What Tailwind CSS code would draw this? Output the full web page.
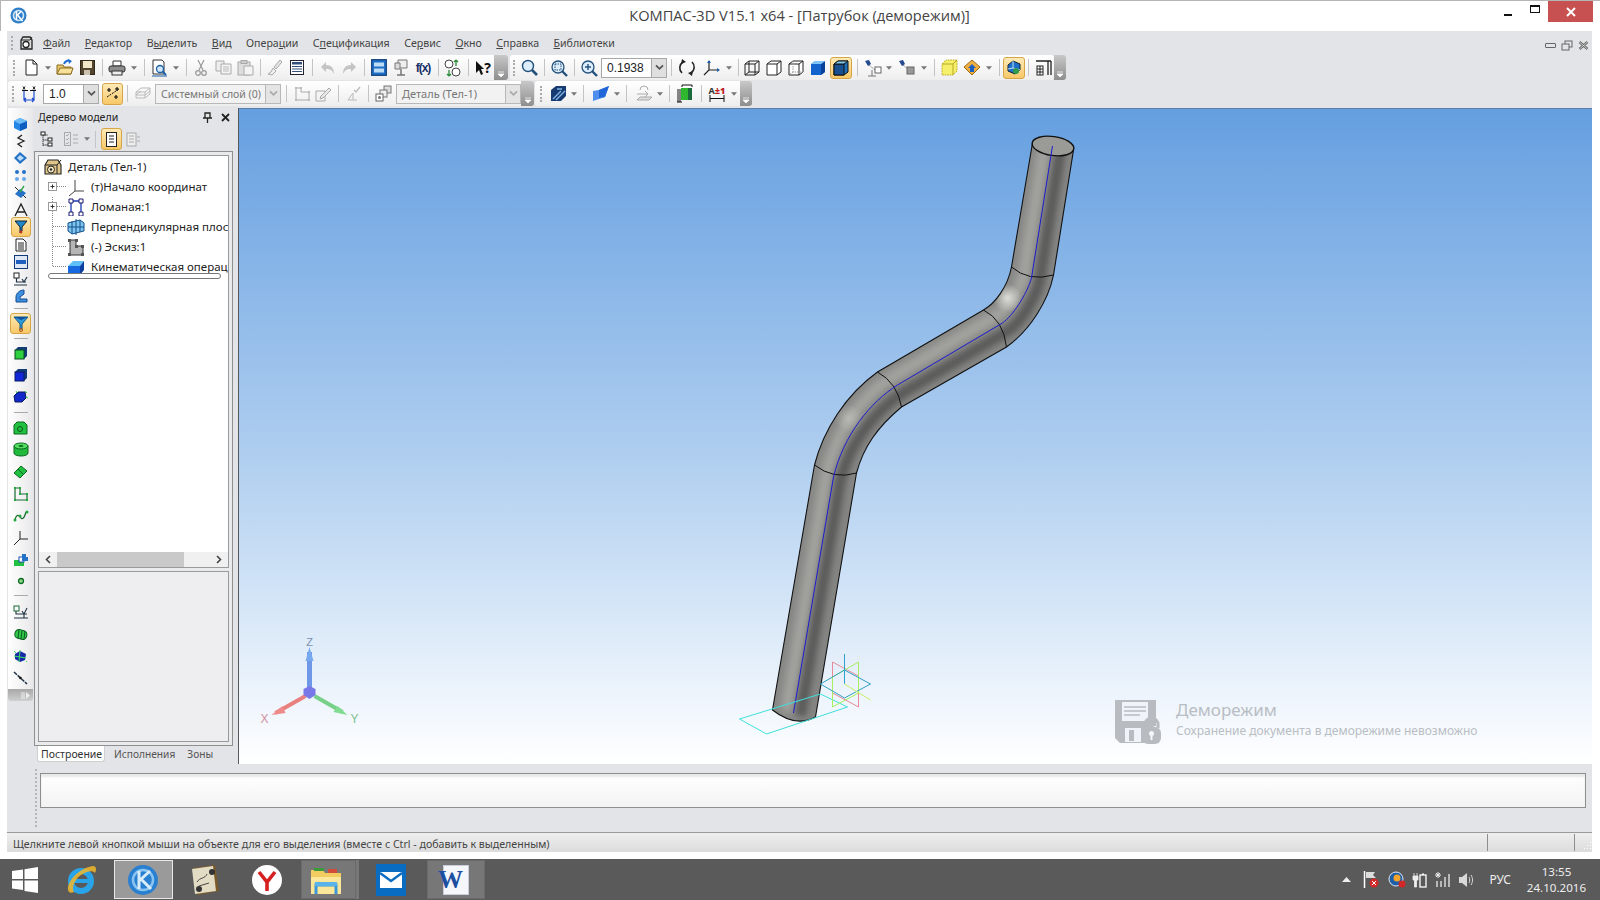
<!DOCTYPE html>
<html lang="ru">
<head>
<meta charset="UTF-8"/>
<title>КОМПАС-3D V15.1 x64</title>
<script src="https://cdn.jsdelivr.net/npm/@tailwindcss/browser@4"></script>
</head>
<body class="w-[1600px] h-[900px] overflow-hidden flex flex-col bg-white font-['Noto_Sans',sans-serif] text-[10.6px] text-[#333]">

<svg class="hidden" width="0" height="0">
  <defs>
    <symbol id="dd" viewBox="0 0 7 4"><path d="M0 0h7L3.5 4z" fill="#777"/></symbol>
    <symbol id="chev" viewBox="0 0 10 8"><path d="M1 1.5l4 4 4-4" fill="none" stroke="currentColor" stroke-width="2"/></symbol>
  </defs>
</svg>

<!-- title bar -->
<header class="h-[31px] shrink-0 relative flex items-center justify-center border-t border-l border-[#b5b5b5] bg-white">
  <svg class="absolute left-[9px] top-[6px]" width="17" height="17" viewBox="0 0 17 17"><circle cx="8.5" cy="8.5" r="8" fill="#2e7fc8"/><circle cx="8.5" cy="8.5" r="5" fill="none" stroke="#cfe6f8" stroke-width="1.6"/><path d="M6.5 4v9M6.5 9l5-5M7.5 8l5 6" stroke="#fff" stroke-width="1.6" fill="none"/></svg>
  <span class="text-[14.6px] text-[#444] font-['Open_Sans',sans-serif] pb-[1px] -ml-[2px]">КОМПАС-3D V15.1 x64 - [Патрубок (деморежим)]</span>
  <div class="absolute right-[7px] top-0 h-[21px] flex items-center">
    <i class="block w-[8px] h-[2px] bg-[#111] mt-[7px] mr-[18px]"></i>
    <i class="block w-[10px] h-[8px] border border-[#111] border-t-2 mb-[5px] mr-[8px]"></i>
    <div class="w-[45px] h-[21px] bg-[#c75050] flex items-center justify-center"><svg width="10" height="10" viewBox="0 0 10 10"><path d="M1 1l8 8M9 1l-8 8" stroke="#fff" stroke-width="2"/></svg></div>
  </div>
</header>

<!-- window -->
<div class="flex-1 min-h-0 ml-[7px] mr-[8px] flex flex-col bg-[#e3e4e7]">

  <!-- menu -->
  <nav class="h-[24px] shrink-0 relative flex items-center pl-[4px] text-[#444]">
    <i class="w-[2px] h-[14px] border-l-2 border-dotted border-[#aaa] mr-[5px]"></i>
    <svg width="16" height="16" viewBox="0 0 16 16" class="mr-[9px]"><path d="M3 5l2-3h7l2 3v9H3z" fill="#ddd" stroke="#222" stroke-width="1.3"/><circle cx="8" cy="9.5" r="3" fill="#fff" stroke="#222" stroke-width="1.3"/><path d="M3 5h9l2-3" fill="none" stroke="#222"/></svg>
    <div class="flex gap-[14.4px] pt-[1px]">
      <span><u>Ф</u>айл</span><span><u>Р</u>едактор</span><span>В<u>ы</u>делить</span><span><u>В</u>ид</span><span>Опера<u>ц</u>ии</span><span>С<u>п</u>ецификация</span><span>Се<u>р</u>вис</span><span><u>О</u>кно</span><span><u>С</u>правка</span><span><u>Б</u>иблиотеки</span>
    </div>
    <div class="absolute right-[3px] top-[9px] flex items-center gap-[5px]">
      <i class="block w-[11px] h-[5px] border border-[#666] rounded-[1px]"></i>
      <svg width="12" height="11" viewBox="0 0 12 11"><rect x="4" y="1" width="7" height="6" fill="none" stroke="#666"/><rect x="1" y="4" width="7" height="6" fill="#e3e4e7" stroke="#666"/></svg>
      <svg width="11" height="9" viewBox="0 0 11 9"><path d="M1.5 1l8 7M9.5 1l-8 7" stroke="#666" stroke-width="2.4"/><path d="M1.5 1l8 7M9.5 1l-8 7" stroke="#e3e4e7" stroke-width=".8"/></svg>
    </div>
  </nav>

  <!-- toolbar row 1 -->
  <div class="h-[26px] shrink-0 flex items-start">
    <div class="ml-[1px] h-[25px] flex items-center bg-gradient-to-b from-white to-[#eeeeee] rounded-l-[3px]">
      <div class="w-[12px] flex justify-center"><i class="h-[16px] border-l-2 border-dotted border-[#aaa]"></i></div>
      <div class="w-[22px] flex justify-center"><svg width="15" height="17" viewBox="0 0 15 17"><path d="M2 1h7l4 4v11H2z" fill="#fff" stroke="#222"/><path d="M9 1v4h4" fill="none" stroke="#222"/></svg></div>
      <div class="w-[12px] flex justify-center"><svg width="6" height="4"><use href="#dd"/></svg></div>
      <div class="w-[22px] flex justify-center"><svg width="18" height="17" viewBox="0 0 18 17"><path d="M1 15V6h6l1 2h7v7z" fill="#e8c86a" stroke="#8a6a20"/><path d="M1 15l3-6h13l-2 6z" fill="#f6e09a" stroke="#8a6a20"/><path d="M8 5c1-3 4-4 6-3" fill="none" stroke="#1d6fd0" stroke-width="2"/><path d="M12 0l4 2-3 3z" fill="#1d6fd0"/></svg></div>
      <div class="w-[22px] flex justify-center"><svg width="15" height="15" viewBox="0 0 15 15"><rect x=".5" y=".5" width="14" height="14" fill="#54452f" stroke="#33291a"/><rect x="3" y="1" width="9" height="7" fill="#f1e6c8"/><rect x="4" y="10" width="6" height="5" fill="#c9c2ae"/></svg></div>
      <div class="w-[8px] flex justify-center"><i class="w-px h-[17px] bg-[#c4c4c4]"></i></div>
      <div class="w-[22px] flex justify-center"><svg width="18" height="16" viewBox="0 0 18 16"><path d="M5 1h8v5H5z" fill="#fff" stroke="#333"/><rect x="1" y="6" width="16" height="6" rx="2" fill="#8e8e8e" stroke="#333"/><rect x="4" y="11" width="10" height="4" fill="#eee" stroke="#333"/></svg></div>
      <div class="w-[12px] flex justify-center"><svg width="6" height="4"><use href="#dd"/></svg></div>
      <div class="w-[8px] flex justify-center"><i class="w-px h-[17px] bg-[#c4c4c4]"></i></div>
      <div class="w-[22px] flex justify-center"><svg width="17" height="18" viewBox="0 0 17 18"><path d="M2 1h9l2 2v12H2z" fill="#fff" stroke="#333"/><circle cx="9" cy="10" r="3.5" fill="#cfe6f8" stroke="#1d5fa8" stroke-width="1.3"/><path d="M11.5 12.5l3.5 3.5" stroke="#1d5fa8" stroke-width="2"/><path d="M1 17h15" stroke="#1d5fa8"/></svg></div>
      <div class="w-[12px] flex justify-center"><svg width="6" height="4"><use href="#dd"/></svg></div>
      <div class="w-[8px] flex justify-center"><i class="w-px h-[17px] bg-[#c4c4c4]"></i></div>
      <div class="w-[22px] flex justify-center"><svg width="12" height="17" viewBox="0 0 12 17"><path d="M3 1l5 10M9 1L4 11" stroke="#999" stroke-width="1.2"/><circle cx="3" cy="14" r="2.3" fill="none" stroke="#999" stroke-width="1.2"/><circle cx="9" cy="14" r="2.3" fill="none" stroke="#999" stroke-width="1.2"/></svg></div>
      <div class="w-[22px] flex justify-center"><svg width="17" height="15" viewBox="0 0 17 15"><path d="M1 1h8v10H1z" fill="#eee" stroke="#aaa"/><path d="M6 4h10v10H6z" fill="#f4f4f4" stroke="#aaa"/><path d="M8 7h6M8 9h6M8 11h6" stroke="#bbb"/></svg></div>
      <div class="w-[22px] flex justify-center"><svg width="17" height="16" viewBox="0 0 17 16"><rect x="1" y="2" width="12" height="13" fill="#ddd" stroke="#aaa"/><rect x="4" y="0.5" width="6" height="3" fill="#ccc" stroke="#aaa"/><path d="M7 6h9v9H7z" fill="#f4f4f4" stroke="#aaa"/></svg></div>
      <div class="w-[8px] flex justify-center"><i class="w-px h-[17px] bg-[#c4c4c4]"></i></div>
      <div class="w-[22px] flex justify-center"><svg width="16" height="17" viewBox="0 0 16 17"><path d="M13 1L7 8l2 2 6-7z" fill="#e3e3e3" stroke="#aaa"/><path d="M6 9l3 3-4 4-4-1 3-2z" fill="#eee" stroke="#aaa"/></svg></div>
      <div class="w-[22px] flex justify-center"><svg width="14" height="15" viewBox="0 0 14 15"><rect x=".5" y=".5" width="13" height="14" fill="#fff" stroke="#223"/><rect x="2" y="2" width="10" height="2.5" fill="#34507c"/><path d="M2 6.5h10M2 9h10M2 11.5h10" stroke="#34507c" stroke-width="1.2"/></svg></div>
      <div class="w-[8px] flex justify-center"><i class="w-px h-[17px] bg-[#c4c4c4]"></i></div>
      <div class="w-[22px] flex justify-center"><svg width="15" height="14" viewBox="0 0 15 14"><path d="M1 6l5-5v3c5 0 8 3 8 9-2-4-4-5-8-5v3z" fill="#c4c4c4"/></svg></div>
      <div class="w-[22px] flex justify-center"><svg width="15" height="14" viewBox="0 0 15 14"><path d="M14 6L9 1v3C4 4 1 7 1 13c2-4 4-5 8-5v3z" fill="#c4c4c4"/></svg></div>
      <div class="w-[8px] flex justify-center"><i class="w-px h-[17px] bg-[#c4c4c4]"></i></div>
      <div class="w-[22px] flex justify-center"><svg width="16" height="17" viewBox="0 0 16 17"><rect x=".7" y=".7" width="14.6" height="15.6" fill="#1f6fc8" stroke="#16447e" stroke-width="1.3"/><rect x="3" y="3.5" width="10" height="4" fill="#bcdcf6"/><rect x="3" y="9.5" width="10" height="4" fill="#bcdcf6"/></svg></div>
      <div class="w-[22px] flex justify-center"><svg width="17" height="17" viewBox="0 0 17 17"><path d="M5 1h9v8H5z" fill="#eee" stroke="#777"/><path d="M2 4h5v6H2z" fill="#ddd" stroke="#777"/><path d="M8 10v6M4 16h8" stroke="#777" stroke-width="1.5"/></svg></div>
      <div class="w-[22px] flex justify-center font-['Liberation_Sans',sans-serif] text-[#16306a] text-[12px] font-bold tracking-[-1px]">f(x)</div>
      <div class="w-[8px] flex justify-center"><i class="w-px h-[17px] bg-[#c4c4c4]"></i></div>
      <div class="w-[22px] flex justify-center"><svg width="18" height="18" viewBox="0 0 18 18"><circle cx="5" cy="5" r="4" fill="#fff" stroke="#444"/><circle cx="12" cy="13" r="4" fill="#fff" stroke="#444"/><path d="M12 1v6M12 1l-2 2M12 1l2 2M5 11v6M5 17l-2-2M5 17l2-2" stroke="#2a8a3a" stroke-width="1.3" fill="none"/></svg></div>
      <div class="w-[8px] flex justify-center"><i class="w-px h-[17px] bg-[#c4c4c4]"></i></div>
      <div class="w-[22px] flex items-center justify-center"><svg width="10" height="15" viewBox="0 0 10 15"><path d="M1 1l8 8H6l2 5-2 1-2-5-3 3z" fill="#111"/></svg><span class="text-[14px] leading-none font-bold text-[#111] -ml-[1px]">?</span></div>
    </div>
    <div class="h-[25px] w-[14px] bg-gradient-to-b from-[#c8c8c8] to-[#8e8e8e] rounded-r-[3px] flex items-end justify-center pb-[3px]"><svg width="6" height="6" viewBox="0 0 6 6"><path d="M0 1h6M0 3h6L3 6z" stroke="#fff" fill="#fff" stroke-width=".7"/></svg></div>
    <div class="ml-[2px] h-[25px] flex items-center bg-gradient-to-b from-white to-[#eeeeee] rounded-[3px]">
      <div class="w-[8px] flex justify-center"><i class="h-[16px] border-l-2 border-dotted border-[#aaa]"></i></div>
      <div class="w-[22px] flex justify-center"><svg width="17" height="18" viewBox="0 0 17 18"><circle cx="7" cy="7" r="5.5" fill="#dceefb" stroke="#24507c" stroke-width="1.4"/><path d="M11 11l5 5" stroke="#24507c" stroke-width="2.6"/></svg></div>
      <div class="w-[8px] flex justify-center"><i class="w-px h-[17px] bg-[#c4c4c4]"></i></div>
      <div class="w-[22px] flex justify-center"><svg width="18" height="18" viewBox="0 0 18 18"><circle cx="8" cy="8" r="6" fill="#dceefb" stroke="#24507c" stroke-width="1.3"/><rect x="5" y="5" width="6" height="6" fill="none" stroke="#24507c" stroke-dasharray="1.5 1"/><path d="M12 12l5 5" stroke="#24507c" stroke-width="2.4"/></svg></div>
      <div class="w-[8px] flex justify-center"><i class="w-px h-[17px] bg-[#c4c4c4]"></i></div>
      <div class="w-[22px] flex justify-center"><svg width="18" height="18" viewBox="0 0 18 18"><circle cx="8" cy="8" r="6" fill="#dceefb" stroke="#24507c" stroke-width="1.3"/><path d="M5 8h6M8 5v6" stroke="#24507c" stroke-width="1.4"/><path d="M12 12l5 5" stroke="#24507c" stroke-width="2.4"/></svg></div>
      <div class="w-[66px] h-[20px] ml-[1px] flex bg-white border border-[#a8a8a8] text-[#222] font-['Liberation_Sans',sans-serif] text-[12px]">
        <span class="flex-1 pl-[5px] leading-[18px]">0.1938</span>
        <div class="w-[15px] bg-[#dfdfdf] border-l border-[#a8a8a8] text-[#555] flex items-center justify-center"><svg width="9" height="7"><use href="#chev"/></svg></div>
      </div>
      <div class="w-[8px] flex justify-center"><i class="w-px h-[17px] bg-[#c4c4c4]"></i></div>
      <div class="w-[22px] ml-[1px] flex justify-center"><svg width="18" height="17" viewBox="0 0 18 17"><path d="M5 3A7 7 0 0 0 4 14M13 14A7 7 0 0 0 14 3" fill="none" stroke="#222" stroke-width="1.6"/><path d="M4 0l4 3-5 2zM14 17l-4-3 5-2z" fill="#222"/></svg></div>
      <div class="w-[22px] ml-[3px] flex justify-center"><svg width="18" height="17" viewBox="0 0 18 17"><path d="M6 2v9L1 16M6 11h10" fill="none" stroke="#222" stroke-width="1.2"/><path d="M6 1l-2 3h4zM17 11l-3-2v4z" fill="#1d5fa8"/></svg></div>
      <div class="w-[12px] flex justify-center"><svg width="6" height="4"><use href="#dd"/></svg></div>
      <div class="w-[6px] flex justify-center"><i class="w-px h-[17px] bg-[#c4c4c4]"></i></div>
      <div class="w-[22px] flex justify-center"><svg width="16" height="16" viewBox="0 0 16 16"><path d="M1 4l4-3h10v11l-4 3H1zM1 4h10v11M11 4l4-3M5 1v11h10M5 12l-4 3" fill="none" stroke="#222"/></svg></div>
      <div class="w-[22px] flex justify-center"><svg width="16" height="16" viewBox="0 0 16 16"><path d="M1 4l4-3h10v11l-4 3H1zM1 4h10v11M11 4l4-3" fill="#fff" stroke="#222"/></svg></div>
      <div class="w-[22px] flex justify-center"><svg width="16" height="16" viewBox="0 0 16 16"><path d="M1 4l4-3h10v11l-4 3H1zM1 4h10v11M11 4l4-3" fill="#fff" stroke="#222"/><path d="M5 1v11h10M5 12l-4 3" fill="none" stroke="#999" stroke-dasharray="1.5 1"/></svg></div>
      <div class="w-[22px] flex justify-center"><svg width="16" height="16" viewBox="0 0 16 16"><path d="M1 4l4-3h10v11l-4 3H1z" fill="#2c8fee"/><path d="M1 4h10v11H1z" fill="#1264cc"/><path d="M11 4l4-3v11l-4 3z" fill="#0a3f9a"/><path d="M1 4l4-3h10l-4 3z" fill="#7ec4f8"/></svg></div>
      <div class="w-[22px] h-[22px] ml-[1px] flex items-center justify-center rounded-[3px] border border-[#d6a548] bg-gradient-to-b from-[#fdeab5] to-[#f8c866]"><svg width="16" height="16" viewBox="0 0 16 16"><path d="M1 4l4-3h10v11l-4 3H1z" fill="#1f6fb8" stroke="#111"/><path d="M1 4h10v11H1z" fill="#174f90" stroke="#111"/><path d="M1 4l4-3h10l-4 3z" fill="#80c8ee" stroke="#111"/></svg></div>
      <div class="w-[10px] flex justify-center"><i class="w-px h-[17px] bg-[#c4c4c4]"></i></div>
      <div class="w-[22px] flex justify-center"><svg width="20" height="18" viewBox="0 0 20 18"><path d="M2 2l4-1 2 4-3 2z" fill="#234a90"/><path d="M6 6l6 5" stroke="#888" stroke-dasharray="2 1"/><rect x="12" y="8" width="6" height="6" fill="#fff" stroke="#666"/><path d="M9 11v6M5 17h8" stroke="#777"/></svg></div>
      <div class="w-[10px] flex justify-center"><svg width="6" height="4"><use href="#dd"/></svg></div>
      <div class="w-[22px] ml-[2px] flex justify-center"><svg width="20" height="18" viewBox="0 0 20 18"><path d="M2 2l4-1 2 4-3 2z" fill="#234a90"/><path d="M6 6l5 4" stroke="#888" stroke-dasharray="2 1"/><rect x="10" y="8" width="7" height="7" fill="#999" stroke="#666"/></svg></div>
      <div class="w-[12px] flex justify-center"><svg width="6" height="4"><use href="#dd"/></svg></div>
      <div class="w-[8px] flex justify-center"><i class="w-px h-[17px] bg-[#c4c4c4]"></i></div>
      <div class="w-[22px] flex justify-center"><svg width="17" height="17" viewBox="0 0 17 17"><path d="M1 5l4-4h11v11l-4 4H1z" fill="#f6ef6a" stroke="#b8a820" stroke-dasharray="1.5 1"/><path d="M1 5h11v11M12 5l4-4" fill="none" stroke="#b8a820"/></svg></div>
      <div class="w-[22px] ml-[1px] flex justify-center"><svg width="18" height="17" viewBox="0 0 18 17"><path d="M1 8l8-7 8 7-8 8z" fill="#f0b040" stroke="#a06a10"/><path d="M5 9l4-4 4 4-2 0v4H7V9z" fill="#1d5fc0"/></svg></div>
      <div class="w-[12px] flex justify-center"><svg width="6" height="4"><use href="#dd"/></svg></div>
      <div class="w-[8px] flex justify-center"><i class="w-px h-[17px] bg-[#c4c4c4]"></i></div>
      <div class="w-[22px] h-[22px] flex items-center justify-center rounded-[3px] border border-[#d6a548] bg-gradient-to-b from-[#fdeab5] to-[#f8c866]"><svg width="16" height="16" viewBox="0 0 16 16"><path d="M2 5l5-4 7 3v6l-5 4-7-3z" fill="#1f6fc8" stroke="#123"/><path d="M7 1v7l7 2M7 8l-5 1" stroke="#bfe0f8" fill="none"/><circle cx="10" cy="11" r="3" fill="#2f9a4a"/></svg></div>
      <div class="w-[7px] flex justify-center"><i class="w-px h-[17px] bg-[#c4c4c4]"></i></div>
      <div class="w-[22px] flex justify-center"><svg width="17" height="17" viewBox="0 0 17 17"><path d="M1 2h15M13 2v14M16 2v14" stroke="#222" stroke-width="1.3" fill="none"/><rect x="2" y="7" width="6" height="9" fill="#fff" stroke="#222"/><path d="M2 10h6M2 13h6M5 7v9" stroke="#222"/></svg></div>
    </div>
    <div class="h-[25px] w-[12px] bg-gradient-to-b from-[#c8c8c8] to-[#8e8e8e] rounded-r-[3px] flex items-end justify-center pb-[3px]"><svg width="6" height="6" viewBox="0 0 6 6"><path d="M0 1h6M0 3h6L3 6z" stroke="#fff" fill="#fff" stroke-width=".7"/></svg></div>
  </div>

  <!-- toolbar row 2 -->
  <div class="h-[27px] shrink-0 flex items-start">
    <div class="ml-[1px] h-[25px] flex items-center bg-gradient-to-b from-white to-[#eeeeee] rounded-l-[3px]">
      <div class="w-[10px] flex justify-center"><i class="h-[16px] border-l-2 border-dotted border-[#aaa]"></i></div>
      <div class="w-[22px] flex justify-center"><svg width="16" height="18" viewBox="0 0 16 18"><path d="M2 1l2 3M4 1L2 4M12 1l2 3M14 1l-2 3M1 5h6M9 5h6" stroke="#111" fill="none" transform="translate(0 .5)"/><path d="M3 6v9M13 6v9M3 15h10M5 13l-2 2 2 2M11 13l2 2-2 2" stroke="#1f4fd0" stroke-width="1.2" fill="none"/></svg></div>
      <div class="w-[56px] h-[20px] ml-[3px] flex bg-white border border-[#a8a8a8] text-[#222] font-['Liberation_Sans',sans-serif] text-[12px]">
        <span class="flex-1 pl-[5px] leading-[18px]">1.0</span>
        <div class="w-[15px] bg-[#dfdfdf] border-l border-[#a8a8a8] text-[#555] flex items-center justify-center"><svg width="9" height="7"><use href="#chev"/></svg></div>
      </div>
      <div class="w-[21px] h-[22px] ml-[3px] flex items-center justify-center rounded-[3px] border border-[#d6a548] bg-gradient-to-b from-[#fdeab5] to-[#f8c866]"><svg width="16" height="17" viewBox="0 0 16 17"><path d="M2 12L14 4" stroke="#111" stroke-dasharray="2 1"/><path d="M4 3v4M2 5h4M12 2v4M10 4h4M11 10v4M9 12h4" stroke="#111" stroke-width="1.2"/></svg></div>
      <div class="w-[9px] flex justify-center"><i class="w-px h-[17px] bg-[#c4c4c4]"></i></div>
      <div class="w-[22px] flex justify-center"><svg width="16" height="14" viewBox="0 0 16 14"><path d="M1 5l5-4h9l-5 4zM1 8l5-4M1 8h9l5-4M1 11h9l5-4M1 5v6M10 5v6M15 1v6" fill="none" stroke="#bbb"/></svg></div>
      <div class="w-[126px] h-[20px] ml-[1px] flex bg-[#f2f2f2] border border-[#b8b8b8] text-[#777] text-[10.5px]">
        <span class="flex-1 pl-[5px] leading-[18px] whitespace-nowrap">Системный слой (0)</span>
        <div class="w-[15px] bg-[#e4e4e4] border-l border-[#b8b8b8] text-[#aaa] flex items-center justify-center"><svg width="9" height="7"><use href="#chev"/></svg></div>
      </div>
      <div class="w-[10px] flex justify-center"><i class="w-px h-[17px] bg-[#c4c4c4]"></i></div>
      <div class="w-[22px] flex justify-center"><svg width="17" height="16" viewBox="0 0 17 16"><path d="M2 2h5v4h8v8H2z" fill="none" stroke="#aaa"/><path d="M1 1h2v2H1zM6 1h2v2H6zM1 13h2v2H1zM14 13h2v2h-2zM14 5h2v2h-2z" fill="#bbb"/></svg></div>
      <div class="w-[20px] flex justify-center"><svg width="17" height="16" viewBox="0 0 17 16"><path d="M1 5h9v10H1z" fill="#f4f4f4" stroke="#aaa"/><path d="M6 10l8-8 2 2-8 8-3 1z" fill="#e8e8e8" stroke="#aaa"/></svg></div>
      <div class="w-[10px] flex justify-center"><i class="w-px h-[17px] bg-[#c4c4c4]"></i></div>
      <div class="w-[21px] flex justify-center"><svg width="16" height="15" viewBox="0 0 16 15"><path d="M2 14h9M2 14l5-7M7 7v7" fill="none" stroke="#bbb"/><path d="M8 4l2 2 4-5" fill="none" stroke="#bbb" stroke-width="1.3"/></svg></div>
      <div class="w-[8px] flex justify-center"><i class="w-px h-[17px] bg-[#c4c4c4]"></i></div>
      <div class="w-[22px] flex justify-center"><svg width="17" height="17" viewBox="0 0 17 17"><rect x="9" y="1" width="7" height="7" fill="#ddd" stroke="#777"/><rect x="5" y="5" width="7" height="7" fill="#eee" stroke="#777"/><rect x="1" y="9" width="7" height="7" fill="#fff" stroke="#666"/><circle cx="4.5" cy="12.5" r="1.5" fill="#777"/></svg></div>
      <div class="w-[125px] h-[20px] ml-[2px] flex bg-[#f2f2f2] border border-[#b8b8b8] text-[#777] text-[11px]">
        <span class="flex-1 pl-[5px] leading-[18px] whitespace-nowrap">Деталь (Тел-1)</span>
        <div class="w-[15px] bg-[#e4e4e4] border-l border-[#b8b8b8] text-[#aaa] flex items-center justify-center"><svg width="9" height="7"><use href="#chev"/></svg></div>
      </div>
    </div>
    <div class="h-[25px] w-[13px] bg-gradient-to-b from-[#c8c8c8] to-[#8e8e8e] rounded-r-[3px] flex items-end justify-center pb-[3px]"><svg width="6" height="6" viewBox="0 0 6 6"><path d="M0 1h6M0 3h6L3 6z" stroke="#fff" fill="#fff" stroke-width=".7"/></svg></div>
    <div class="ml-[1px] h-[25px] flex items-center bg-gradient-to-b from-white to-[#eeeeee] rounded-l-[3px]">
      <div class="w-[12px] flex justify-center"><i class="h-[16px] border-l-2 border-dotted border-[#aaa]"></i></div>
      <div class="w-[22px] flex justify-center"><svg width="17" height="17" viewBox="0 0 17 17"><path d="M1 5l5-4h10v10l-5 5H1z" fill="#173a70"/><path d="M3 14l8-8M6 15l9-9M7 4l5 0" stroke="#7fb4e4" stroke-width="1.4"/></svg></div>
      <div class="w-[10px] flex justify-center"><svg width="6" height="4"><use href="#dd"/></svg></div>
      <div class="w-[8px] flex justify-center"><i class="w-px h-[17px] bg-[#c4c4c4]"></i></div>
      <div class="w-[22px] ml-[3px] flex justify-center"><svg width="18" height="17" viewBox="0 0 18 17"><path d="M1 6l6-1 10-4-4 11-12 4z" fill="#4f90ee"/><path d="M7 5l10-4-4 11-6 1z" fill="#2166d8"/></svg></div>
      <div class="w-[10px] flex justify-center"><svg width="6" height="4"><use href="#dd"/></svg></div>
      <div class="w-[8px] flex justify-center"><i class="w-px h-[17px] bg-[#c4c4c4]"></i></div>
      <div class="w-[22px] ml-[4px] flex justify-center"><svg width="18" height="17" viewBox="0 0 18 17"><path d="M4 1a4 4 0 0 1 8 0" fill="none" transform="translate(0 4)" stroke="#aaa"/><path d="M1 9h11M9 6l3 3-3 3" fill="none" stroke="#aaa"/><path d="M1 15l3-3h12l-3 3z" fill="#ddd" stroke="#aaa"/></svg></div>
      <div class="w-[8px] flex justify-center"><svg width="6" height="4"><use href="#dd"/></svg></div>
      <div class="w-[10px] flex justify-center"><i class="w-px h-[17px] bg-[#c4c4c4]"></i></div>
      <div class="w-[22px] flex justify-center"><svg width="16" height="19" viewBox="0 0 16 19"><rect x="4" y="4" width="11" height="12" fill="#2fb82f"/><rect x="11" y="4" width="4" height="12" fill="#1a6a3a"/><path d="M1 5v13M3 5v13M5 1h10M0 18h5M5 3V1M15 3V1" stroke="#111" fill="none"/></svg></div>
      <div class="w-[10px] flex justify-center"><i class="w-px h-[17px] bg-[#c4c4c4]"></i></div>
      <div class="w-[22px] flex flex-col items-center leading-none"><span class="text-[9px] font-bold text-[#333]">A<b class="text-[#c02020]">±1</b></span><svg width="16" height="7" viewBox="0 0 16 7"><path d="M1 0v7M15 0v7M1 3.500h14" stroke="#111"/></svg></div>
      <div class="w-[12px] flex justify-center"><svg width="6" height="4"><use href="#dd"/></svg></div>
    </div>
    <div class="h-[25px] w-[12px] bg-gradient-to-b from-[#c8c8c8] to-[#8e8e8e] rounded-r-[3px] flex items-end justify-center pb-[3px]"><svg width="6" height="6" viewBox="0 0 6 6"><path d="M0 1h6M0 3h6L3 6z" stroke="#fff" fill="#fff" stroke-width=".7"/></svg></div>
  </div>

  <!-- middle -->
  <div class="flex-1 min-h-0 flex">
    <!-- left tool strip -->
    <aside class="w-[27px] shrink-0 flex flex-col">
      <div class="ml-[1px] w-[25px] h-[581px] bg-gradient-to-r from-white to-[#e8e8ea] flex flex-col items-center pt-[8px]">
        <div class="h-[17px] flex items-center"><svg width="15" height="15" viewBox="0 0 15 15"><path d="M1 4l6-3 7 3v7l-7 3-6-3z" fill="#2486e6"/><path d="M7 7l7-3v7l-7 3z" fill="#0f5cc0"/><path d="M1 4l6-3 7 3-7 3z" fill="#6ebcf6"/></svg></div>
        <div class="h-[17px] flex items-center"><svg width="10" height="15" viewBox="0 0 10 15"><path d="M6 1L2 4l6 3-6 3 4 3" fill="none" stroke="#222" stroke-width="1.3"/></svg></div>
        <div class="h-[17px] flex items-center"><svg width="15" height="14" viewBox="0 0 15 14"><path d="M1 7l6-6 7 6-7 6z" fill="#2472c8"/><path d="M4 7l3-3 4 3-4 3z" fill="#bcdcf6"/></svg></div>
        <div class="h-[17px] flex items-center"><svg width="13" height="13" viewBox="0 0 13 13"><circle cx="3" cy="3" r="2" fill="#2472c8"/><circle cx="10" cy="3" r="2" fill="#2472c8"/><circle cx="3" cy="10" r="2" fill="#6aa8e8"/><circle cx="10" cy="10" r="2" fill="#6aa8e8"/></svg></div>
        <div class="h-[17px] flex items-center"><svg width="15" height="15" viewBox="0 0 15 15"><path d="M2 2l11 11" stroke="#222"/><path d="M2 9l5-5 6 4-5 5z" fill="#2472c8"/><path d="M11 1l-4 6" stroke="#2fa84a" stroke-width="1.4"/></svg></div>
        <div class="h-[17px] flex items-center"><svg width="14" height="15" viewBox="0 0 14 15"><path d="M1 14L7 2l6 12M3 10h8" fill="none" stroke="#222" stroke-width="1.3"/></svg></div>
        <div class="h-[20px] w-[20px] -my-[1px] flex items-center justify-center rounded-[3px] border border-[#d6a548] bg-gradient-to-b from-[#fdeab5] to-[#f8c866]"><svg width="14" height="14" viewBox="0 0 14 14"><path d="M1 1h12L8 7v4L6 13V7z" fill="#1f88c8" stroke="#123"/><circle cx="7" cy="12" r="1.400" fill="#c03020"/></svg></div>
        <div class="h-[17px] flex items-center mt-[1px]"><svg width="12" height="14" viewBox="0 0 12 14"><path d="M1 1h7l3 3v9H1z" fill="#fff" stroke="#222"/><path d="M3 5h6M3 7h6M3 9h6M3 11h6" stroke="#222"/></svg></div>
        <div class="h-[17px] flex items-center"><svg width="14" height="14" viewBox="0 0 14 14"><rect x=".5" y=".5" width="13" height="13" fill="#dfe8f4" stroke="#123a78"/><rect x="2" y="5" width="10" height="4" fill="#1f5fc0"/></svg></div>
        <div class="h-[17px] flex items-center"><svg width="15" height="14" viewBox="0 0 15 14"><rect x="1" y="1" width="5" height="5" fill="#fff" stroke="#222"/><path d="M3.500 6v4H13M9 7l2 3 3-5M1 13h13" fill="none" stroke="#234" stroke-width="1.2"/></svg></div>
        <div class="h-[17px] flex items-center"><svg width="14" height="14" viewBox="0 0 14 14"><path d="M2 13V8c0-4 4-7 8-7v4L6 8v2h7v3z" fill="#3d8fe0" stroke="#174a90"/></svg></div>
        <i class="block w-[14px] h-px bg-[#aaa] mt-[4px]"></i>
        <div class="h-[21px] w-[21px] mt-[4px] flex items-center justify-center rounded-[3px] border border-[#d6a548] bg-gradient-to-b from-[#fdeab5] to-[#f8c866]"><svg width="16" height="16" viewBox="0 0 16 16"><path d="M1 1h14L9 8v5H7V8z" fill="#2d9ad8" stroke="#1a5a8a"/><path d="M1 1h14l-7 3z" fill="#0f4f9a"/><circle cx="8" cy="14" r="1.500" fill="none" stroke="#b05010"/></svg></div>
        <i class="block w-[14px] h-px bg-[#aaa] mt-[4px] mb-[3px]"></i>
        <div class="h-[22px] flex items-center"><svg width="14" height="14" viewBox="0 0 14 14"><path d="M1 4l3-3h9v9l-3 3H1z" fill="#123c78"/><rect x="1" y="4" width="9" height="9" fill="#2fd040" stroke="#0a4a20"/></svg></div>
        <div class="h-[22px] flex items-center"><svg width="14" height="14" viewBox="0 0 14 14"><path d="M1 4l3-3h9v9l-3 3H1z" fill="#123c78"/><rect x="1" y="4" width="9" height="9" fill="#1228d8" stroke="#0a1a60"/></svg></div>
        <div class="h-[22px] flex items-center"><svg width="15" height="14" viewBox="0 0 15 14"><path d="M1 6l4-4h7l1 6-4 4H2z" fill="#1228c8" stroke="#0a1a60"/><path d="M12 1l2 2M13 7l2 1M3 1l1 2" stroke="#3ad04a"/></svg></div>
        <i class="block w-[14px] h-px bg-[#aaa] mt-[4px] mb-[4px]"></i>
        <div class="h-[22px] flex items-center"><svg width="15" height="14" viewBox="0 0 15 14"><path d="M1 4l3-3h7l3 3v9H1z" fill="#22c040" stroke="#0a6a20"/><circle cx="7" cy="8" r="2.500" fill="none" stroke="#0a5a1a"/></svg></div>
        <div class="h-[22px] flex items-center"><svg width="16" height="15" viewBox="0 0 16 15"><path d="M1 4v7c0 4 14 4 14 0V4z" fill="#22b83c" stroke="#0a6a20"/><ellipse cx="8" cy="4" rx="7" ry="3" fill="#55de60" stroke="#0a6a20"/><ellipse cx="8" cy="4" rx="2.500" ry="1" fill="#0a6a20"/></svg></div>
        <div class="h-[22px] flex items-center"><svg width="15" height="14" viewBox="0 0 15 14"><path d="M1 8l7-7 6 5-7 7z" fill="#22c040" stroke="#0a6a20"/><path d="M5 4l6 6" stroke="#0a6a20"/></svg></div>
        <div class="h-[22px] flex items-center"><svg width="16" height="16" viewBox="0 0 16 16"><path d="M2 2h5v6h7v6H2z" fill="none" stroke="#186a30" stroke-width="1.200"/><path d="M1 1h2v2H1zM6 1h2v2H6zM1 13h2v2H1zM13 13h2v2h-2zM13 7h2v2h-2zM6 7h2v2H6z" fill="#22a83c"/></svg></div>
        <div class="h-[22px] flex items-center"><svg width="16" height="12" viewBox="0 0 16 12"><path d="M2 10c1-5 3-6 5-3s4 2 6-5" fill="none" stroke="#186a30" stroke-width="1.300"/><circle cx="2" cy="10" r="1.500" fill="#22a83c"/><circle cx="7" cy="6" r="1.500" fill="#22a83c"/><circle cx="14" cy="2" r="1.500" fill="#22a83c"/></svg></div>
        <div class="h-[22px] flex items-center"><svg width="16" height="16" viewBox="0 0 16 16"><path d="M7 1v8H15M7 9L1 15" fill="none" stroke="#222"/></svg></div>
        <div class="h-[22px] flex items-center"><svg width="16" height="14" viewBox="0 0 16 14"><rect x="1" y="7" width="10" height="6" fill="#22c040"/><rect x="6" y="4" width="5" height="5" fill="#fff" stroke="#1f4fb0"/><path d="M9 1h4v3h2v4H9z" fill="#2472c8"/></svg></div>
        <div class="h-[22px] flex items-center"><svg width="8" height="8" viewBox="0 0 8 8"><circle cx="4" cy="4" r="2.500" fill="#8ad88a" stroke="#0a6a20" stroke-width="1.300"/></svg></div>
        <i class="block w-[14px] h-px bg-[#aaa] mt-[3px] mb-[5px]"></i>
        <div class="h-[22px] flex items-center"><svg width="16" height="15" viewBox="0 0 16 15"><rect x="1" y="1" width="5" height="5" fill="#fff" stroke="#186a30"/><path d="M3 6v3h11M9 6l2 3 3-6M1 13h14M11 9v4" fill="none" stroke="#234" stroke-width="1.100"/></svg></div>
        <div class="h-[22px] flex items-center"><svg width="16" height="13" viewBox="0 0 16 13"><rect x="2" y="2" width="12" height="9" rx="4" fill="#30c848" stroke="#0a5a20" transform="rotate(15 8 6)"/><path d="M6 2l-1 8M9 3l-1 8M12 3l-1 8" stroke="#0a5a20"/></svg></div>
        <div class="h-[22px] flex items-center"><svg width="15" height="14" viewBox="0 0 15 14"><path d="M2 5l5-3 6 3-1 6-5 2-5-3z" fill="#142aa8"/><path d="M1 7l12 2M7 1l-1 12M1 2l2 2M13 12l1 1" stroke="#3ee060"/></svg></div>
        <div class="h-[22px] flex items-center"><svg width="15" height="14" viewBox="0 0 15 14"><path d="M1 1l13 12" stroke="#234" stroke-width="1.600" stroke-dasharray="4 1"/><circle cx="7.500" cy="7" r="1.300" fill="#111"/></svg></div>
      </div>
      <div class="ml-[1px] w-[25px] h-[12px] bg-gradient-to-b from-[#a8a8a8] to-[#cfcfcf] rounded-b-[3px] flex items-center justify-end pr-[3px]"><svg width="9" height="7" viewBox="0 0 9 7"><path d="M1 0v7M3 0v7" stroke="#eee"/><path d="M5 0l4 3.500-4 3.500z" fill="#eee"/></svg></div>
    </aside>

    <!-- model tree panel -->
    <section class="w-[205px] shrink-0 flex flex-col border-r border-[#56585c]">
      <div class="h-[19px] flex items-center justify-between pl-[4px] pr-[8px] text-[#222] shrink-0">
        <span>Дерево модели</span>
        <div class="flex items-center gap-[9px]">
          <svg width="9" height="11" viewBox="0 0 9 11"><path d="M2 1h5v5H2zM0 6h9M4.500 6v5" fill="none" stroke="#222" stroke-width="1.300"/></svg>
          <svg width="9" height="9" viewBox="0 0 9 9"><path d="M1 1l7 7M8 1L1 8" stroke="#222" stroke-width="1.800"/></svg>
        </div>
      </div>
      <div class="h-[24px] flex items-center pl-[2px] shrink-0">
        <div class="w-[20px] flex justify-center"><svg width="13" height="16" viewBox="0 0 13 16"><path d="M3 1v14M3 4h5M3 9h5M3 14h5" fill="none" stroke="#333" stroke-dasharray="1.500 .7"/><rect x="1" y="1" width="4" height="3" fill="#fff" stroke="#222"/><rect x="8" y="7" width="4" height="3" fill="#fff" stroke="#222"/><rect x="8" y="12" width="4" height="3" fill="#fff" stroke="#222"/></svg></div>
        <div class="w-[24px] ml-[3px] flex justify-center"><svg width="15" height="14" viewBox="0 0 15 14"><rect x=".5" y=".5" width="6" height="13" fill="none" stroke="#aaa"/><path d="M2 3l1 1 2-2M2 7l1 1 2-2M2 11l1 1 2-2M9 3h5M9 7h5M9 11h5" stroke="#aaa" fill="none"/></svg></div>
        <svg width="6" height="4" class="ml-[1px]"><use href="#dd"/></svg>
        <div class="w-[9px] flex justify-center ml-[1px]"><i class="w-px h-[17px] bg-[#c4c4c4]"></i></div>
        <div class="w-[21px] h-[22px] ml-[1px] flex items-center justify-center rounded-[3px] border border-[#d6a548] bg-gradient-to-b from-[#fdeab5] to-[#f8c866]"><svg width="11" height="15" viewBox="0 0 11 15"><rect x=".5" y=".5" width="10" height="14" fill="#fff" stroke="#222"/><path d="M3 4h5M3 7h5M3 10h5" stroke="#222"/></svg></div>
        <div class="w-[23px] flex justify-center"><svg width="15" height="15" viewBox="0 0 15 15"><rect x="1" y="1" width="9" height="13" fill="#eee" stroke="#aaa"/><path d="M3 4h5M3 7h5M3 10h5M11 5h3M11 9h3" stroke="#aaa"/></svg></div>
      </div>
      <div class="flex-1 min-h-0 border border-[#8f8f8f] mr-[5px] p-[3px] flex flex-col bg-[#e9eaec]">
        <div class="h-[413px] border border-[#9a9a9a] bg-white flex flex-col shrink-0">
          <div class="flex-1 min-h-0 relative overflow-hidden">
            <div class="h-[20px] flex items-center pl-[5px] mt-[1px]">
              <svg width="18" height="16" viewBox="0 0 18 16" class="mr-[6px] shrink-0"><path d="M1 6l3-5h10l3 5v9H1z" fill="#e0c48a" stroke="#222" stroke-width="1.100"/><path d="M1 6h12l4-5M13 6v9" fill="none" stroke="#222"/><circle cx="7" cy="10.500" r="3.500" fill="#f6e7c0" stroke="#222"/><circle cx="7" cy="10.500" r="1.200" fill="#222"/></svg>
              <span class="text-[#222] text-[11.500px] whitespace-nowrap">Деталь (Тел-1)</span>
            </div>
            <div class="h-[20px] flex items-center">
              <svg width="28" height="20" viewBox="0 0 28 20" class="shrink-0"><rect x="9.500" y="5.500" width="8" height="8" fill="#fff" stroke="#999"/><path d="M11.500 9.500h4M13.500 7.500v4" stroke="#333"/><path d="M18 9.500h10" stroke="#888" stroke-dasharray="1 1"/></svg>
              <svg width="18" height="18" viewBox="0 0 18 18" class="mr-[6px] shrink-0"><path d="M8 2v11H17M8 13l-6 5" fill="none" stroke="#444"/></svg>
              <span class="text-[#222] text-[11.500px] whitespace-nowrap">(т)Начало координат</span>
            </div>
            <div class="h-[20px] flex items-center">
              <svg width="28" height="20" viewBox="0 0 28 20" class="shrink-0"><path d="M13.500 0v5M13.500 14v6" stroke="#888" stroke-dasharray="1 1"/><rect x="9.500" y="5.500" width="8" height="8" fill="#fff" stroke="#999"/><path d="M11.500 9.500h4M13.500 7.500v4" stroke="#333"/><path d="M18 9.500h10" stroke="#888" stroke-dasharray="1 1"/></svg>
              <svg width="18" height="18" viewBox="0 0 18 18" class="mr-[6px] shrink-0"><path d="M4 16V3h10v13" fill="none" stroke="#1a3ab0" stroke-width="1.300"/><path d="M2 1h4v4H2zM12 1h4v4h-4zM2 14h4v4H2zM12 14h4v4h-4z" fill="#fff" stroke="#1a1a70"/></svg>
              <span class="text-[#222] text-[11.500px] whitespace-nowrap">Ломаная:1</span>
            </div>
            <div class="h-[20px] flex items-center">
              <svg width="28" height="20" viewBox="0 0 28 20" class="shrink-0"><path d="M13.500 0v20M14 9.500h14" stroke="#888" stroke-dasharray="1 1"/></svg>
              <svg width="18" height="18" viewBox="0 0 18 18" class="mr-[6px] shrink-0"><path d="M1 5l12-3 4 3v8L5 16l-4-3z" fill="#7fc4ee" stroke="#14508a"/><path d="M9 1v16M1 9h16M5 3v13M13 2v12" stroke="#14508a"/></svg>
              <span class="text-[#222] text-[11.500px] whitespace-nowrap">Перпендикулярная плос</span>
            </div>
            <div class="h-[20px] flex items-center">
              <svg width="28" height="20" viewBox="0 0 28 20" class="shrink-0"><path d="M13.500 0v20M14 9.500h14" stroke="#888" stroke-dasharray="1 1"/></svg>
              <svg width="18" height="18" viewBox="0 0 18 18" class="mr-[6px] shrink-0"><path d="M3 2h6v6h7v9H3z" fill="#b5b5b5" stroke="#333"/><path d="M1 1h3v3H1zM8 1h3v3H8zM8 7h3v3H8zM14 7h3v3h-3zM14 15h3v3h-3zM1 15h3v3H1z" fill="#555"/></svg>
              <span class="text-[#222] text-[11.500px] whitespace-nowrap">(-) Эскиз:1</span>
            </div>
            <div class="h-[20px] flex items-center">
              <svg width="28" height="20" viewBox="0 0 28 20" class="shrink-0"><path d="M13.500 0v9.500h14" stroke="#888" stroke-dasharray="1 1" fill="none"/></svg>
              <svg width="18" height="18" viewBox="0 0 18 18" class="mr-[6px] shrink-0"><path d="M1 8l5-5h11l-4 5z" fill="#5fc0f8"/><path d="M1 8h12v9H1z" fill="#1868e0"/><path d="M13 8l4-5v9l-4 5z" fill="#0e3f9e"/></svg>
              <span class="text-[#222] text-[11.500px] whitespace-nowrap">Кинематическая операц</span>
            </div>
            <div class="absolute left-[9px] top-[117px] w-[173px] h-[6px] bg-white border border-[#777] rounded-[3px]"></div>
          </div>
          <div class="h-[15px] flex items-stretch bg-[#f0f0f0] shrink-0">
            <div class="w-[18px] flex items-center justify-center text-[#444]"><svg width="6" height="9" viewBox="0 0 6 9"><path d="M5 1L1.500 4.500 5 8" fill="none" stroke="currentColor" stroke-width="1.600"/></svg></div>
            <div class="w-[127px] bg-[#c9c9c9]"></div>
            <div class="flex-1"></div>
            <div class="w-[18px] flex items-center justify-center text-[#444]"><svg width="6" height="9" viewBox="0 0 6 9"><path d="M1 1l3.500 3.500L1 8" fill="none" stroke="currentColor" stroke-width="1.600"/></svg></div>
          </div>
        </div>
        <div class="flex-1 mt-[3px] border border-[#9a9a9a] bg-[#eeeef0]"></div>
      </div>
      <div class="h-[18px] flex items-start pl-[3px] shrink-0 text-[#555]">
        <span class="h-[16px] w-[68px] bg-white rounded-b-[3px] border-x border-b border-[#cfcfcf] pl-[3px] leading-[17px] text-[#333] text-[10.5px]">Построение</span>
        <span class="ml-[9px] leading-[17px] text-[10.2px]">Исполнения</span>
        <span class="ml-[12px] leading-[17px] text-[10.2px]">Зоны</span>
      </div>
    </section>

    <!-- 3D viewport -->
    <main class="flex-1 min-w-0 relative overflow-hidden bg-gradient-to-b from-[#659fe0] via-[#b2d0f0] via-[55%] to-white border-t border-[#5c7fa6]">
      <svg class="absolute inset-0 w-full h-full" viewBox="240 109 1350 655">
        <defs>
          <clipPath id="pipe"><path d="M1032 143L1011 267C1007 287 995 303 983 310L877 372C845 395 823 430 814 465L772 710Q795 728 815 717L856 473C863 447 877 427 901 407L1006 347C1030 330 1048 300 1053 275L1073 150Q1052 160 1032 143Z"/></clipPath>
          <filter id="b4" x="-20%" y="-20%" width="140%" height="140%"><feGaussianBlur stdDeviation="4"/></filter>
          <filter id="b3" x="-20%" y="-20%" width="140%" height="140%"><feGaussianBlur stdDeviation="3"/></filter>
          <radialGradient id="spot"><stop offset="0" stop-color="#dcdcd8"/><stop offset="1" stop-color="#dcdcd8" stop-opacity="0"/></radialGradient>
        </defs>
        <g clip-path="url(#pipe)">
          <rect x="750" y="120" width="340" height="620" fill="#858583"/>
          <path d="M1044 146L1023 276C1018 293 1004 312 995 316L890 378C863 395 836 430 826 474L786 712" fill="none" stroke="#a5a5a1" stroke-width="12" filter="url(#b4)"/>
          <path d="M1060 150L1039 282C1034 300 1020 322 1009 330L904 392C877 409 850 440 840 480L800 716" fill="none" stroke="#5a5a5a" stroke-width="11" filter="url(#b3)"/>
          <circle cx="1007" cy="298" r="14" fill="url(#spot)"/>
          <circle cx="848" cy="418" r="14" fill="url(#spot)" opacity=".4"/>
        </g>
        <ellipse cx="1052.500" cy="146" rx="21" ry="9.500" transform="rotate(8 1052.500 146)" fill="#9a9a96" stroke="#111" stroke-width="1.400"/>
        <path d="M1032 143L1011 267C1007 287 995 303 983 310L877 372C845 395 823 430 814 465L772 710Q795 728 815 717L856 473C863 447 877 427 901 407L1006 347C1030 330 1048 300 1053 275L1073 150" fill="none" stroke="#111" stroke-width="1.100"/>
        <path d="M1011 267Q1028 282 1053 275M983 310Q1003 320 1006 347M877 372Q897 383 901 407M814 465Q833 480 856 473" fill="none" stroke="#111"/>
        <path d="M1052 146L1031 278C1026 295 1012 316 1002 323L897 385C870 402 843 435 833 477L793 713" fill="none" stroke="#1c1cd0"/>
        <path d="M739 719L766 734L847 707L820 694Z" fill="none" stroke="#3fe0dc"/>
        <path d="M832 662L858 676V707L832 693Z" fill="none" stroke="#e88a9a"/>
        <path d="M858 662L832 677V707L858 693Z" fill="none" stroke="#a8ee60"/>
        <path d="M820 684L844 670L870 684L844 698Z" fill="none" stroke="#30a0c0"/>
        <path d="M844 654V684" stroke="#30a0d0"/>
        <path d="M844 684L870 700" stroke="#c8ee60"/>
        <g>
          <path d="M309 652V692" stroke="#6f97e8" stroke-width="5"/>
          <path d="M309 647l-4 14h8z" fill="#78a8ee"/>
          <path d="M305 696L275 713" stroke="#e88080" stroke-width="4"/>
          <path d="M271 715l11-9 3 7z" fill="#ee8a8a"/>
          <path d="M314 696L342 712" stroke="#78d088" stroke-width="4"/>
          <path d="M347 715l-14-3 4-6z" fill="#80dc90"/>
          <path d="M309 686l6 3v6l-6 4-6-4v-6z" fill="#7878e8"/>
        </g>
        <text x="309" y="646" text-anchor="middle" font-family="Liberation Sans" font-size="11" fill="#7890b0">Z</text>
        <text x="264" y="723" text-anchor="middle" font-family="Liberation Sans" font-size="12" fill="#d090a0">X</text>
        <text x="354" y="723" text-anchor="middle" font-family="Liberation Sans" font-size="12" fill="#80c090">Y</text>
      </svg>
      <div class="absolute left-[876px] top-[590px] flex items-start">
        <svg width="46" height="46" viewBox="0 0 46 46" class="mr-[15px]"><path d="M0 1h41v26a11 11 0 0 0-9 14v3H5l-5-5z" fill="#b8bbc0"/><rect x="7" y="3" width="26" height="19" fill="#f0f4fa"/><path d="M9 8h22M9 12h22M9 16h16" stroke="#b8bbc0" stroke-width="1.600"/><rect x="10" y="29" width="16" height="14" fill="#f0f4fa"/><rect x="14" y="31" width="5" height="11" fill="#b8bbc0"/><path d="M30 29v-5a7 7 0 0 1 13 0v5" fill="none" stroke="#b8bbc0" stroke-width="3"/><rect x="27" y="28" width="19" height="17" rx="6" fill="#b8bbc0"/><circle cx="36.500" cy="34.500" r="2.500" fill="#f4f7fb"/><rect x="35.500" y="35" width="2" height="6" fill="#f4f7fb"/></svg>
        <div class="flex flex-col text-[#b9bdc4]">
          <span class="text-[17px] leading-[22px]">Деморежим</span>
          <span class="text-[12px] leading-[18px] mt-[1px] whitespace-nowrap">Сохранение документа в деморежиме невозможно</span>
        </div>
      </div>
    </main>
  </div>

  <!-- command area -->
  <div class="h-[69px] shrink-0 flex pl-[28px] pr-[6px] pt-[9px] border-b border-[#9a9a9a]">
    <i class="block h-[58px] w-0 border-l-2 border-dotted border-[#b5b5b5] -mt-[4px] mr-[3px]"></i>
    <div class="flex-1 h-[35px] border border-[#8e8e8e] bg-gradient-to-b from-white to-[#f3f3f3] shadow-[inset_0_3px_2px_#e8e8e8]"></div>
  </div>

  <!-- status bar -->
  <footer class="h-[19px] shrink-0 flex items-center bg-gradient-to-b from-[#eeeeee] to-[#dcdcdc] text-[#444]">
    <span class="flex-1 pl-[6px] pt-[4px] whitespace-nowrap">Щелкните левой кнопкой мыши на объекте для его выделения (вместе с Ctrl - добавить к выделенным)</span>
    <i class="block w-px h-[17px] bg-[#8e8e8e]"></i>
    <span class="w-[86px]"></span>
    <i class="block w-px h-[17px] bg-[#8e8e8e]"></i>
    <span class="w-[17px] h-full flex items-end justify-end"><svg width="11" height="11" viewBox="0 0 11 11"><path d="M9 1h1v1H9zM6 4h1v1H6zM9 4h1v1H9zM3 7h1v1H3zM6 7h1v1H6zM9 7h1v1H9z" fill="#fff"/></svg></span>
  </footer>
</div>

<div class="h-[7px] shrink-0 bg-white"></div>

<!-- taskbar -->
<footer class="h-[41px] shrink-0 flex items-center bg-[#5a5a5a] text-white relative">
  <div class="w-[50px] flex justify-center"><svg width="26" height="26" viewBox="0 0 26 26"><path d="M0 4l11-1.500V12H0zM12.500 2.300L26 0v12H12.500zM0 13.500h11V23L0 21.500zM12.500 13.500H26V26L12.500 24z" fill="#fff"/></svg></div>
  <div class="w-[60px] ml-[1px] flex justify-center"><svg width="32" height="32" viewBox="0 0 32 32"><circle cx="16" cy="17" r="10" fill="none" stroke="#2aa4e8" stroke-width="6"/><path d="M8 17h18" stroke="#2aa4e8" stroke-width="4"/><path d="M4 28C-1 22 12 4 28 2c3 0 4 3 2 7-2-3-8-2-14 2C10 15 6 24 9 28c-2 1-4 1-5 0z" fill="#f4b82a" fill-opacity=".85"/></svg></div>
  <div class="w-[59px] ml-[3px] h-[39px] border border-[#e8e8e8] bg-[#9a9a9a] flex items-center justify-center pr-[2px]"><svg width="32" height="32" viewBox="0 0 32 32"><circle cx="16" cy="16" r="15" fill="#2a80d0"/><circle cx="16" cy="16" r="10" fill="none" stroke="#8ac4f0" stroke-width="2.500"/><path d="M12 7v18M12 17L23 7M14 15l10 10" stroke="#d8ecfa" stroke-width="3" fill="none"/></svg></div>
  <div class="w-[64px] flex justify-center"><svg width="30" height="32" viewBox="0 0 30 32"><path d="M3 4l22-3 4 26-22 4z" fill="#7a5a28"/><path d="M2 5l21-3 3 25-21 3z" fill="#e2dcc4"/><path d="M7 18c3-5 8-3 10-8M9 22l10-3" stroke="#444" fill="none"/><circle cx="22" cy="8" r="3" fill="#333"/><circle cx="9" cy="25" r="3" fill="#333"/></svg></div>
  <div class="w-[62px] flex justify-center pr-[2px]"><svg width="30" height="30" viewBox="0 0 30 30"><circle cx="15" cy="15" r="15" fill="#fff"/><path d="M7 7l8 10 8-10M15 17v9" fill="none" stroke="#d62020" stroke-width="3.600"/></svg></div>
  <div class="w-[55px] h-[39px] ml-[2px] bg-[#777777] border border-[#6a6a6a] flex items-center justify-center pr-[5px]"><svg width="32" height="30" viewBox="0 0 32 30"><path d="M1 5h12l2 3h16v21H1z" fill="#f2cc60"/><rect x="4" y="3" width="10" height="3" fill="#3a9a3a"/><rect x="18" y="4" width="9" height="4" fill="#d24a3a"/><path d="M1 12h30v17H1z" fill="#fbe69a"/><path d="M6 29V20h20v9" fill="none" stroke="#3a98d8" stroke-width="3"/><rect x="5" y="17" width="22" height="4" fill="#5ab4ea"/></svg></div>
  <i class="block w-[3px] h-[39px] bg-[#777777]"></i>
  <div class="w-[68px] flex justify-center pr-[5px]"><div class="w-[30px] h-[32px] bg-[#0a6cc0] flex items-center justify-center"><svg width="22" height="16" viewBox="0 0 22 16"><rect width="22" height="16" fill="#fff"/><path d="M0 1l11 8 11-8" fill="none" stroke="#0a6cc0" stroke-width="2.400"/></svg></div></div>
  <div class="w-[58px] h-[39px] bg-[#777777] border border-[#6a6a6a] flex items-center justify-center relative">
    <div class="w-[26px] h-[30px] bg-[#f4f6fa] border border-[#ccd] relative overflow-hidden"></div>
    <span class="absolute left-[10px] top-[6px] font-['Liberation_Serif',serif] text-[25px] leading-none font-bold text-[#1d4fa0]">W</span>
  </div>

  <div class="absolute right-0 top-0 h-full flex items-center">
    <svg width="9" height="5" viewBox="0 0 9 5" class="mr-[12px]"><path d="M0 5l4.500-5L9 5z" fill="#eee"/></svg>
    <svg width="16" height="17" viewBox="0 0 16 17" class="mr-[9px]"><path d="M1.500 0v17" stroke="#fff" stroke-width="1.500"/><path d="M3 1h9l-2 3 3 3H3z" fill="#ddd"/><circle cx="11" cy="12" r="4.500" fill="#d02828"/><path d="M9 10l4 4M13 10l-4 4" stroke="#fff"/></svg>
    <svg width="18" height="17" viewBox="0 0 18 17" class="mr-[6px]"><circle cx="8" cy="8" r="7" fill="#1f5fa8" stroke="#dfe8f4"/><circle cx="9" cy="7" r="3.500" fill="#f4a42a"/><circle cx="14" cy="13" r="3.500" fill="#d02828"/></svg>
    <svg width="15" height="16" viewBox="0 0 15 16" class="mr-[8px]"><path d="M2 1v3M5 1v3M1 4h5v4H4.500v7H2.500V8H1z" fill="#eee" stroke="#eee" stroke-width=".8"/><rect x="8" y="3" width="6" height="12" fill="none" stroke="#fff" stroke-width="1.300"/><rect x="10" y="1.500" width="2" height="1.500" fill="#fff"/></svg>
    <svg width="16" height="15" viewBox="0 0 16 15" class="mr-[8px]"><path d="M3 0v6M0 3h6M1 1l4 4M5 1L1 5" stroke="#eee"/><path d="M1 9h2v6H1zM5 9h2v6H5zM9 5h2v10H9zM13 2h2v13h-2z" fill="#b8b8b8"/></svg>
    <svg width="15" height="14" viewBox="0 0 15 14" class="mr-[15px]"><path d="M0 4h3l5-4v14l-5-4H0z" fill="#d8d8d8"/><path d="M10 4c1 2 1 4 0 6M12 2c2 3 2 7 0 10" fill="none" stroke="#ddd"/></svg>
    <span class="text-[12px] text-[#eee] mr-[18px]">РУС</span>
    <div class="w-[55px] mr-[16px] flex flex-col items-center text-[11.600px] leading-[16px] text-[#eee] whitespace-nowrap">
      <span>13:55</span>
      <span>24.10.2016</span>
    </div>
  </div>
</footer>
</body>
</html>
